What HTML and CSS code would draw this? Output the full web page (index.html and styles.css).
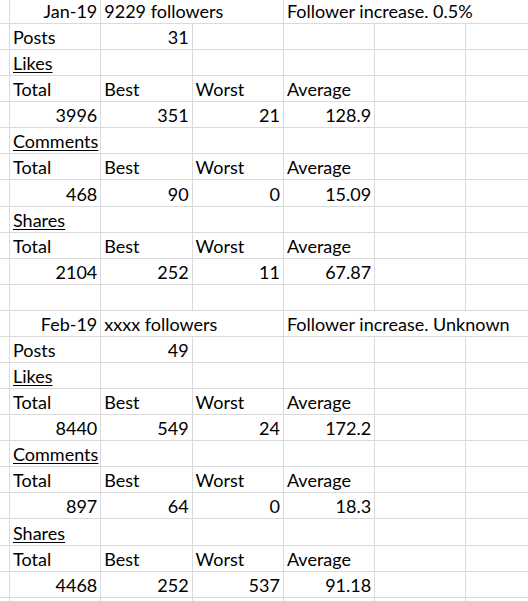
FILE: index.html
```html
<!DOCTYPE html>
<html>
<head>
<meta charset="utf-8">
<link rel="stylesheet" href="styles.css">
</head>
<body>
<div class="sheet">
  <div class="c"></div><div class="c r">Jan-19</div><div class="c s2">9229 followers</div><div class="c s3 e">Follower increase. 0.5%</div>
  <div class="c"></div><div class="c">Posts</div><div class="c r">31</div><div class="c"></div><div class="c"></div><div class="c"></div><div class="c e"></div>
  <div class="c"></div><div class="c"><span class="u">Likes</span></div><div class="c"></div><div class="c"></div><div class="c"></div><div class="c"></div><div class="c e"></div>
  <div class="c"></div><div class="c">Total</div><div class="c">Best</div><div class="c">Worst</div><div class="c">Average</div><div class="c"></div><div class="c e"></div>
  <div class="c"></div><div class="c r">3996</div><div class="c r">351</div><div class="c r">21</div><div class="c r">128.9</div><div class="c"></div><div class="c e"></div>
  <div class="c"></div><div class="c"><span class="u">Comments</span></div><div class="c"></div><div class="c"></div><div class="c"></div><div class="c"></div><div class="c e"></div>
  <div class="c"></div><div class="c">Total</div><div class="c">Best</div><div class="c">Worst</div><div class="c">Average</div><div class="c"></div><div class="c e"></div>
  <div class="c"></div><div class="c r">468</div><div class="c r">90</div><div class="c r">0</div><div class="c r">15.09</div><div class="c"></div><div class="c e"></div>
  <div class="c"></div><div class="c"><span class="u">Shares</span></div><div class="c"></div><div class="c"></div><div class="c"></div><div class="c"></div><div class="c e"></div>
  <div class="c"></div><div class="c">Total</div><div class="c">Best</div><div class="c">Worst</div><div class="c">Average</div><div class="c"></div><div class="c e"></div>
  <div class="c"></div><div class="c r">2104</div><div class="c r">252</div><div class="c r">11</div><div class="c r">67.87</div><div class="c"></div><div class="c e"></div>
  <div class="c"></div><div class="c"></div><div class="c"></div><div class="c"></div><div class="c"></div><div class="c"></div><div class="c e"></div>
  <div class="c"></div><div class="c r">Feb-19</div><div class="c s2">xxxx followers</div><div class="c s3 e">Follower increase. Unknown</div>
  <div class="c"></div><div class="c">Posts</div><div class="c r">49</div><div class="c"></div><div class="c"></div><div class="c"></div><div class="c e"></div>
  <div class="c"></div><div class="c"><span class="u">Likes</span></div><div class="c"></div><div class="c"></div><div class="c"></div><div class="c"></div><div class="c e"></div>
  <div class="c"></div><div class="c">Total</div><div class="c">Best</div><div class="c">Worst</div><div class="c">Average</div><div class="c"></div><div class="c e"></div>
  <div class="c"></div><div class="c r">8440</div><div class="c r">549</div><div class="c r">24</div><div class="c r">172.2</div><div class="c"></div><div class="c e"></div>
  <div class="c"></div><div class="c"><span class="u">Comments</span></div><div class="c"></div><div class="c"></div><div class="c"></div><div class="c"></div><div class="c e"></div>
  <div class="c"></div><div class="c">Total</div><div class="c">Best</div><div class="c">Worst</div><div class="c">Average</div><div class="c"></div><div class="c e"></div>
  <div class="c"></div><div class="c r">897</div><div class="c r">64</div><div class="c r">0</div><div class="c r">18.3</div><div class="c"></div><div class="c e"></div>
  <div class="c"></div><div class="c"><span class="u">Shares</span></div><div class="c"></div><div class="c"></div><div class="c"></div><div class="c"></div><div class="c e"></div>
  <div class="c"></div><div class="c">Total</div><div class="c">Best</div><div class="c">Worst</div><div class="c">Average</div><div class="c"></div><div class="c e"></div>
  <div class="c"></div><div class="c r">4468</div><div class="c r">252</div><div class="c r">537</div><div class="c r">91.18</div><div class="c"></div><div class="c e"></div>
  <div class="c"></div><div class="c"></div><div class="c"></div><div class="c"></div><div class="c"></div><div class="c"></div><div class="c e"></div>
</div>
</body>
</html>
```

FILE: styles.css
```css
html, body {
  margin: 0;
  padding: 0;
  background: #ffffff;
  overflow: hidden;
}

.sheet {
  display: grid;
  grid-template-columns: 10px repeat(5, 91.3px) 1fr;
  grid-template-rows: 24px repeat(23, 26.09px);
  width: 528px;
  height: 601px;
  overflow: hidden;
  font-family: Lato, "Liberation Sans", sans-serif;
  font-size: 18px;
  color: #000000;
}

.c {
  box-sizing: border-box;
  border-right: 1px solid #dadada;
  border-bottom: 1px solid #dadada;
  padding: 0 3px 1px 3px;
  display: flex;
  align-items: flex-end;
  justify-content: flex-start;
  white-space: nowrap;
  line-height: 21px;
  min-width: 0;
}

.e {
  border-right: none;
}

.r {
  justify-content: flex-end;
}

.s2 {
  grid-column: span 2;
}

.s3 {
  grid-column: span 3;
}

.u {
  text-decoration: underline;
  text-decoration-thickness: 1px;
  text-underline-offset: 2px;
}
```
